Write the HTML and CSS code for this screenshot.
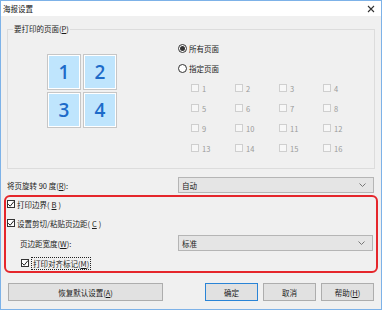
FILE: index.html
```html
<!DOCTYPE html>
<html lang="zh-CN">
<head>
  <meta charset="UTF-8">
  <title>海报设置</title>
  <link rel="stylesheet" href="styles.css">
</head>
<body>
  <div class="window">
    <div class="titlebar">
      <span class="title">海报设置</span>
      <svg class="close" width="8" height="8" viewBox="0 0 8 8">
        <path d="M1 1L7 7M7 1L1 7" stroke="#333" stroke-width="1.1" fill="none"/>
      </svg>
    </div>

    <div class="content">
      <fieldset class="group">
        <legend>要打印的页面(<u>P</u>)</legend>
        <div class="group-inner">
          <div class="preview">
            <div class="tiles">
              <div class="tile">1</div>
              <div class="tile">2</div>
              <div class="tile">3</div>
              <div class="tile">4</div>
            </div>
          </div>
          <div class="options">
            <div class="row"><span class="radio checked"></span>所有页面</div>
            <div class="row"><span class="radio"></span>指定页面</div>
            <div class="pages">
              <div class="page"><span class="box"></span>1</div>
              <div class="page"><span class="box"></span>2</div>
              <div class="page"><span class="box"></span>3</div>
              <div class="page"><span class="box"></span>4</div>
              <div class="page"><span class="box"></span>5</div>
              <div class="page"><span class="box"></span>6</div>
              <div class="page"><span class="box"></span>7</div>
              <div class="page"><span class="box"></span>8</div>
              <div class="page"><span class="box"></span>9</div>
              <div class="page"><span class="box"></span>10</div>
              <div class="page"><span class="box"></span>11</div>
              <div class="page"><span class="box"></span>12</div>
              <div class="page"><span class="box"></span>13</div>
              <div class="page"><span class="box"></span>14</div>
              <div class="page"><span class="box"></span>15</div>
              <div class="page"><span class="box"></span>16</div>
            </div>
          </div>
        </div>
      </fieldset>

      <div class="field rotate">
        <span class="field-label">将页旋转 90 度(<u>R</u>):</span>
        <div class="select">
          <span>自动</span>
          <svg width="7" height="4" viewBox="0 0 7 4"><path d="M0.5 0.5L3.5 3.5L6.5 0.5" stroke="#777" fill="none"/></svg>
        </div>
      </div>

      <div class="highlight">
        <div class="check-row"><span class="check on"><svg width="8" height="8" viewBox="0 0 8 8"><path d="M1.2 4.2L3.2 6.2L7 1.5" stroke="#222" stroke-width="1" fill="none"/></svg></span>打印边界(<u>B</u>)</div>
        <div class="check-row"><span class="check on"><svg width="8" height="8" viewBox="0 0 8 8"><path d="M1.2 4.2L3.2 6.2L7 1.5" stroke="#222" stroke-width="1" fill="none"/></svg></span>设置剪切/粘贴页边距(<u>C</u>)</div>
        <div class="field margin">
          <span class="field-label indent">页边距宽度(<u>W</u>):</span>
          <div class="select">
            <span>标准</span>
            <svg width="7" height="4" viewBox="0 0 7 4"><path d="M0.5 0.5L3.5 3.5L6.5 0.5" stroke="#777" fill="none"/></svg>
          </div>
        </div>
        <div class="check-row indent-check"><span class="check on"><svg width="8" height="8" viewBox="0 0 8 8"><path d="M1.2 4.2L3.2 6.2L7 1.5" stroke="#222" stroke-width="1" fill="none"/></svg></span><span class="focus">打印对齐标记(<u>M</u>)</span></div>
      </div>

      <div class="buttons">
        <button class="btn wide">恢复默认设置(<u>A</u>)</button>
        <div class="btn-group">
          <button class="btn default">确定</button>
          <button class="btn">取消</button>
          <button class="btn">帮助(<u>H</u>)</button>
        </div>
      </div>
    </div>
  </div>
</body>
</html>
```

FILE: styles.css
```css
* { margin: 0; padding: 0; box-sizing: border-box; }
body {
  font-family: "Noto Sans CJK SC", sans-serif;
  font-size: 7.5px;
  color: #1a1a1a;
  background: #fff;
}
u { text-underline-offset: 1px; }
.window {
  width: 382px;
  height: 310px;
  border: 1px solid #7db2e8;
  background: #f0f0f0;
  display: flex;
  flex-direction: column;
}
.titlebar {
  height: 15px;
  background: #fff;
  display: flex;
  align-items: center;
  justify-content: space-between;
  padding: 0 6px 0 2px;
}
.title { font-size: 7.5px; color: #111; }
.content {
  flex: 1;
  padding: 0 6px;
  display: flex;
  flex-direction: column;
}

/* group box */
.group {
  margin-top: 7px;
  border: 1px solid #dcdcdc;
  padding: 3px 0 10px 0;
}
.group legend {
  margin-left: 5px;
  padding: 0 1px;
  line-height: 12px;
}
.group-inner { display: flex; }
.preview { width: 170px; }
.tiles {
  margin: 16px 0 0 39px;
  display: grid;
  grid-template-columns: 34px 34px;
  grid-template-rows: 36px 36px;
  gap: 2px;
}
.tile {
  background: #bfe5fd;
  border: 1px solid #c6c6c6;
  box-shadow: inset 0 0 0 1px #fff;
  color: #1d6bc9;
  font-family: "Open Sans", "Noto Sans", sans-serif;
  font-size: 19px;
  font-weight: 600;
  display: flex;
  align-items: center;
  justify-content: center;
}
.options { flex: 1; }
.row {
  height: 20px;
  display: flex;
  align-items: center;
  gap: 2px;
}
.radio {
  width: 9px;
  height: 9px;
  border: 1px solid #333;
  border-radius: 50%;
  background: #fff;
  display: flex;
  align-items: center;
  justify-content: center;
}
.radio.checked::after {
  content: "";
  width: 5px;
  height: 5px;
  border-radius: 50%;
  background: #333;
}
.pages {
  margin-left: 13px;
  display: grid;
  grid-template-columns: repeat(4, 44px);
  grid-auto-rows: 20px;
}
.page {
  display: flex;
  align-items: center;
  gap: 3px;
  color: #9a9a9a;
}
.box {
  width: 8px;
  height: 8px;
  border: 1px solid #cfcfcf;
  background: #f7f7f7;
}

/* fields */
.field {
  display: flex;
  align-items: center;
}
.field-label { width: 171px; }
.field-label.indent { padding-left: 13px; }
.rotate {
  margin-top: 8px;
  height: 16px;
}
.select {
  flex: 1;
  height: 16px;
  margin-right: 1px;
  background: #e5e5e5;
  border: 1px solid #b5b5b5;
  display: flex;
  align-items: center;
  justify-content: space-between;
  padding: 0 7px 0 3px;
}

/* red frame */
.highlight {
  margin: 2px -3px 0 -3px;
  border: 2px solid #e5262b;
  border-radius: 6px;
  padding: 0 2px 1px 1px;
  display: flex;
  flex-direction: column;
  gap: 5px;
}
.check-row {
  height: 14px;
  display: flex;
  align-items: center;
  gap: 2px;
}
.indent-check { padding-left: 14px; }
.margin { height: 16px; }
.check {
  width: 8px;
  height: 8px;
  border: 1px solid #333;
  background: #fff;
  display: flex;
}
.check svg { margin: -1px; }
.focus {
  border: 1px dotted #222;
  padding: 0 1px;
  line-height: 11px;
}

/* buttons */
.buttons {
  margin: 10px 1px 0 1px;
  display: flex;
  justify-content: space-between;
}
.btn {
  height: 18px;
  width: 53px;
  background: #e1e1e1;
  border: 1px solid #adadad;
  font-family: inherit;
  font-size: 7.5px;
  color: #1a1a1a;
}
.btn.wide { width: 155px; }
.btn.default { border-color: #2a84d6; }
.btn-group {
  display: flex;
  gap: 5px;
}
```
